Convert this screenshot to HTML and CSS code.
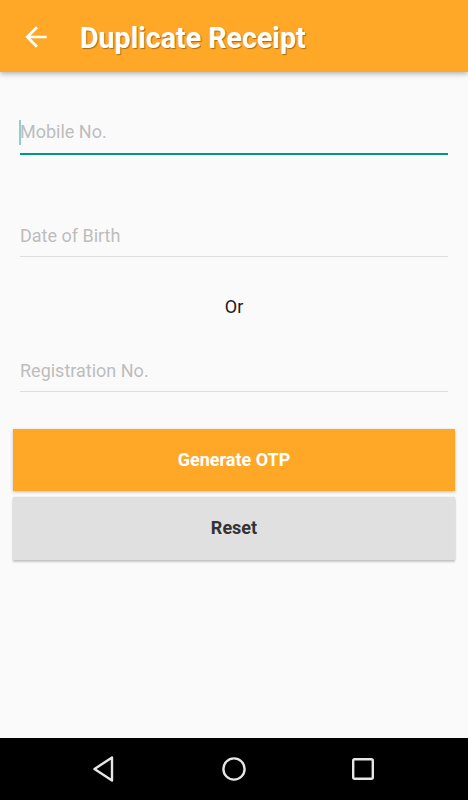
FILE: index.html
```html
<!DOCTYPE html>
<html>
<head>
<meta charset="utf-8">
<link rel="stylesheet" href="styles.css">
</head>
<body>
<div class="screen">
  <header class="appbar">
    <svg class="back" viewBox="0 0 24 24" width="32" height="32"><path d="M20 11H7.83l5.59-5.59L12 4l-8 8 8 8 1.41-1.41L7.83 13H20v-2z" fill="#fff"/></svg>
    <h1 class="title">Duplicate Receipt</h1>
  </header>
  <main class="content">
    <div class="form">
      <div class="field field-active"><span class="cursor"></span><span class="ph">Mobile No.</span></div>
      <div class="field field-dob"><span class="ph">Date of Birth</span></div>
      <div class="or">Or</div>
      <div class="field field-reg"><span class="ph">Registration No.</span></div>
    </div>
    <div class="buttons">
      <div class="btn btn-primary">Generate OTP</div>
      <div class="btn btn-secondary">Reset</div>
    </div>
  </main>
  <nav class="navbar">
    <svg width="26" height="28" viewBox="0 0 26 28"><path d="M21 2.5 L3.5 14 L21 25.5 Z" fill="none" stroke="#e6e6e6" stroke-width="2.4" stroke-linejoin="round"/></svg>
    <svg width="26" height="26" viewBox="0 0 26 26"><circle cx="13" cy="13" r="10.6" fill="none" stroke="#e6e6e6" stroke-width="2.4"/></svg>
    <svg width="24" height="24" viewBox="0 0 24 24"><rect x="2.2" y="2.2" width="19.6" height="19.6" rx="1.5" fill="none" stroke="#e6e6e6" stroke-width="2.4"/></svg>
  </nav>
</div>
</body>
</html>
```
FILE: styles.css
```css
* { box-sizing: border-box; }
html, body { margin: 0; padding: 0; }
body {
  background: #fafafa;
  font-family: Roboto, "Liberation Sans", sans-serif;
}
.screen {
  width: 468px;
  height: 800px;
  display: flex;
  flex-direction: column;
  overflow: hidden;
}
.appbar {
  height: 72px;
  flex: none;
  background: #ffa726;
  display: flex;
  align-items: center;
  padding-left: 20px;
  box-shadow: 0 2px 5px rgba(0,0,0,0.28);
  position: relative;
  z-index: 1;
}
.back {
  display: block;
  margin-top: 2px;
}
.title {
  margin: 0 0 0 28px;
  font-size: 28.6px;
  font-weight: 700;
  color: #fff;
  line-height: 32px;
  padding-top: 3px;
  text-shadow: 1px 1px 1px rgba(0,0,0,0.35);
}
.content {
  flex: 1;
  display: flex;
  flex-direction: column;
}
.form {
  padding: 48px 20px 0 20px;
  display: flex;
  flex-direction: column;
}
.field {
  box-sizing: content-box;
  height: 32px;
  font-size: 18px;
  line-height: 24px;
  border-bottom: 1px solid #dedede;
}
.field-active {
  border-bottom: 2px solid #009688;
  height: 33px;
}
.field-dob { margin-top: 69px; }
.field-reg { margin-top: 40px; }
.ph { color: #bdbdbd; }
.cursor {
  display: inline-block;
  width: 2px;
  height: 25px;
  background: #8fcfc8;
  vertical-align: -7px;
  margin-left: -1px;
  margin-right: -1px;
}
.or {
  margin-top: 38px;
  text-align: center;
  font-size: 18px;
  line-height: 24px;
  color: #1a1a1a;
}
.buttons {
  margin-top: 37px;
  padding: 0 13px;
  display: flex;
  flex-direction: column;
  gap: 6px;
}
.btn {
  height: 62px;
  display: flex;
  align-items: center;
  justify-content: center;
  font-size: 18px;
  font-weight: 700;
  padding-bottom: 2px;
}
.btn-primary {
  background: #ffa726;
  color: #fff;
  box-shadow: 0 1px 3px rgba(0,0,0,0.25);
}
.btn-secondary {
  background: #e0e0e0;
  color: #333;
  height: 63px;
  box-shadow: 0 2px 2px rgba(0,0,0,0.2), 0 0 2px rgba(0,0,0,0.1);
}
.navbar {
  height: 62px;
  flex: none;
  background: #000;
  display: flex;
  align-items: center;
  justify-content: space-between;
  padding: 0 93px 0 91px;
}
```
